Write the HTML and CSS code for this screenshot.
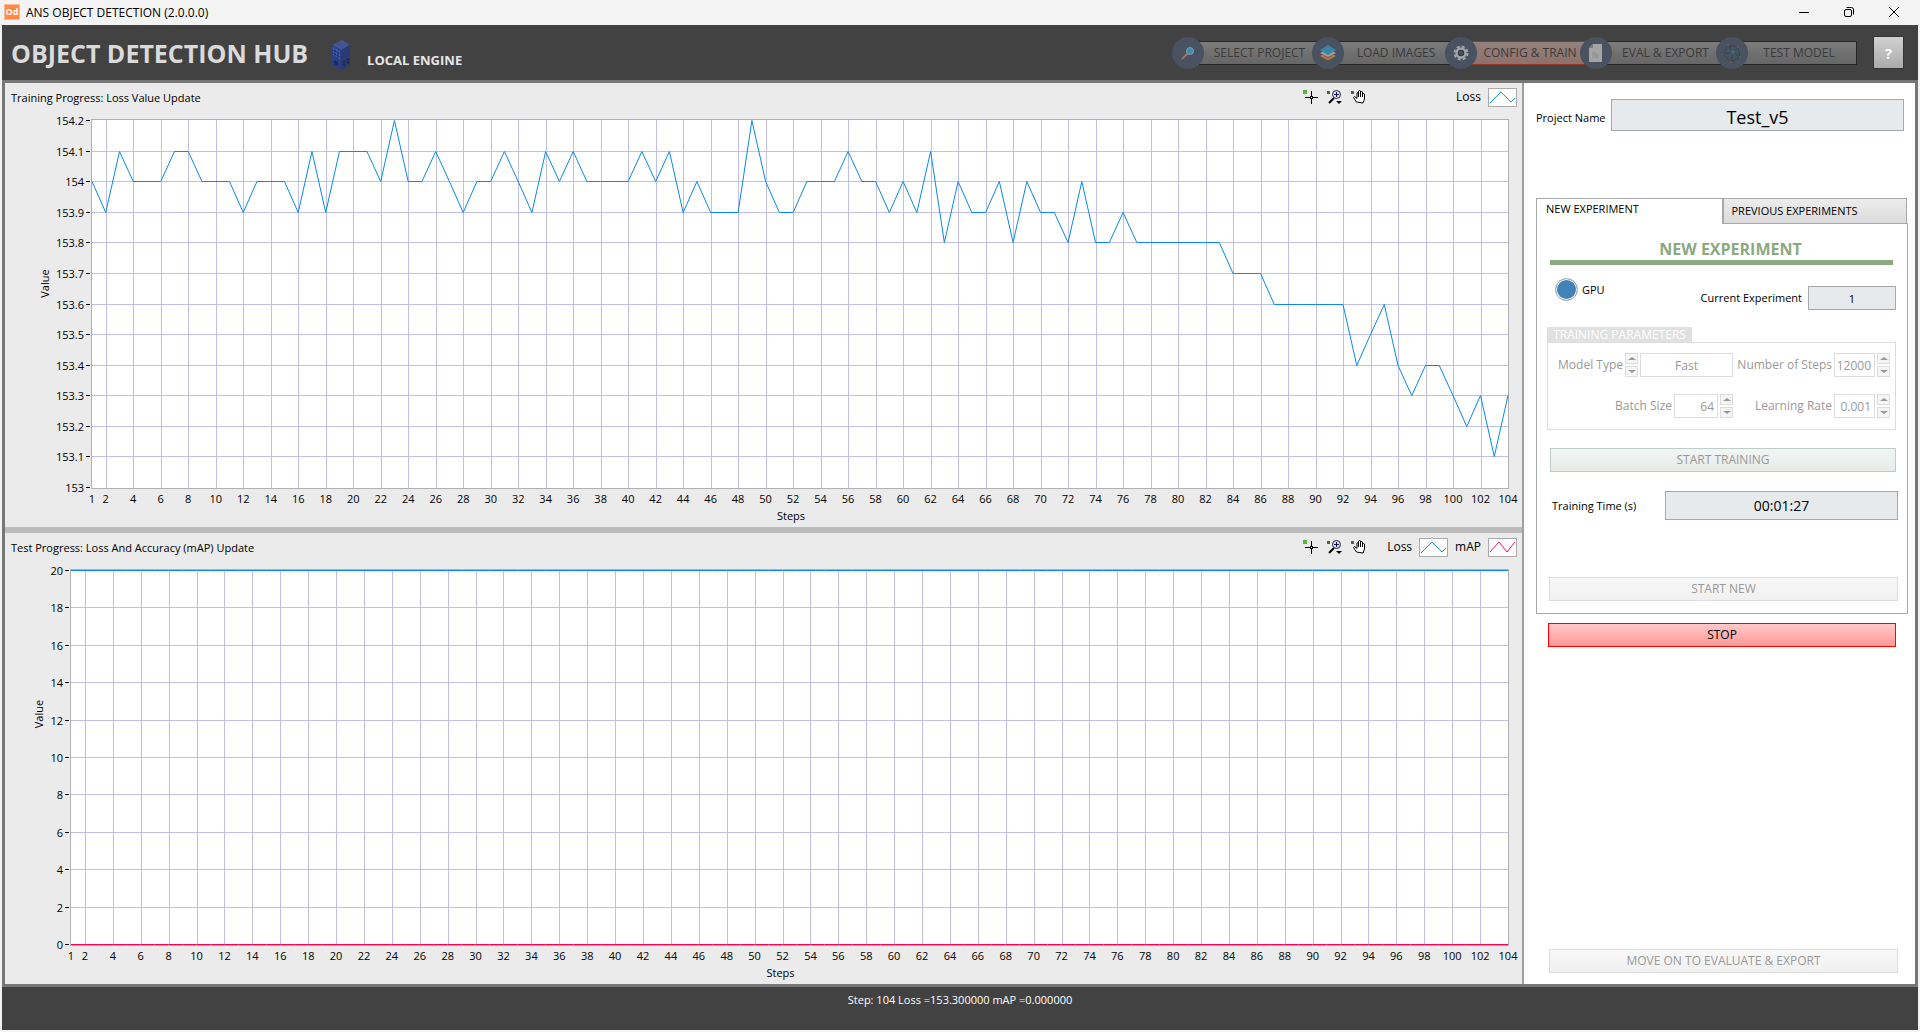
FILE: index.html
```html
<!DOCTYPE html>
<html lang="en">
<head>
    <meta charset="UTF-8">
    <meta name="viewport" content="width=device-width, initial-scale=1.0">
    <title>ANS OBJECT DETECTION</title>
    <link rel="stylesheet" href="styles.css">
</head>
<body>
    <div class="titlebar">
        <span class="app-icon">Od</span>
        <span class="app-name">ANS OBJECT DETECTION (2.0.0.0)</span>
        <div class="window-buttons">
            <button aria-label="Minimize"><svg width="12" height="12" viewBox="0 0 12 12"><path d="M1 6.5h10"/></svg></button>
            <button aria-label="Restore"><svg width="12" height="12" viewBox="0 0 12 12"><rect x="1.5" y="3.5" width="7" height="7" rx="1.5"/><path d="M3.5 1.5h5a2 2 0 0 1 2 2v5"/></svg></button>
            <button aria-label="Close"><svg width="12" height="12" viewBox="0 0 12 12"><path d="M1 1l10 10M11 1L1 11"/></svg></button>
        </div>
    </div>

    <div class="app">
        <header class="header">
            <h1>OBJECT DETECTION HUB</h1>
            <svg class="server-icon" width="20" height="32" viewBox="0 0 20 32">
                <path d="M1 6L11 1l8 5-9 5z" fill="#3f5596"/>
                <path d="M1 6l9 5v20l-9-5z" fill="#2a3f86"/>
                <path d="M10 11l9-5v20l-9 5z" fill="#2b3a70"/>
                <path d="M2 8l7 4v8l-7-4z" fill="#3f66b8"/>
                <path d="M2 11l7 4M2 14l7 4M4 9v8M7 11v8" stroke="#1f316e"/>
                <path d="M3 21l4 2v4l-4-2z" fill="#1b2858"/>
                <path d="M12 23l2-1M16 21l2-1M12 26l2-1M16 24l2-1" stroke="#1b2858" stroke-width="2"/>
            </svg>
            <span class="engine">LOCAL ENGINE</span>

            <nav class="steps">
                <button class="step">
                    <span class="step-icon"><svg width="16" height="16" viewBox="0 0 16 16"><path d="M2 14l6-6" stroke="#a9744a" stroke-width="2"/><circle cx="10" cy="6" r="3.5" fill="#3d8fb0" stroke="#8a98a8" stroke-width="1"/></svg></span>
                    <span class="step-label">SELECT PROJECT</span>
                </button>
                <button class="step">
                    <span class="step-icon"><svg width="18" height="18" viewBox="0 0 18 18"><path d="M1 12l8 4.500 8-4.500-3-1.500-5 3-5-3z" fill="#b07a3c"/><path d="M1 9l8 5 8-5-3-1.500-5 3-5-3z" fill="#a83a35"/><path d="M1 9l3-1.500 5 3 5-3L17 9l-8 4z" fill="#9aa3a8"/><path d="M1 6l8-5 8 5-8 5z" fill="#3787a8"/></svg></span>
                    <span class="step-label">LOAD IMAGES</span>
                </button>
                <button class="step active">
                    <span class="step-icon"><svg width="16" height="16" viewBox="0 0 16 16"><circle cx="8" cy="8" r="6.500" fill="none" stroke="#a2a4a6" stroke-width="2" stroke-dasharray="3 2.100"/><circle cx="8" cy="8" r="4.500" fill="#343c49" stroke="#a2a4a6" stroke-width="2.500"/><circle cx="8" cy="8" r="2" fill="#485261"/></svg></span>
                    <span class="step-label">CONFIG &amp; TRAIN</span>
                </button>
                <button class="step">
                    <span class="step-icon"><svg width="14" height="18" viewBox="0 0 14 18"><path d="M4 0h9v18H0V4z" fill="#a4a4a4"/><path d="M4 0v4H0z" fill="#777b80"/><path d="M3 8h4v2h3v4H3z" fill="#989898"/></svg></span>
                    <span class="step-label">EVAL &amp; EXPORT</span>
                </button>
                <button class="step">
                    <span class="step-icon"><svg width="20" height="20" viewBox="0 0 20 20"><path d="M6 2l10 2 2 10-9 5L1 11zM11 9L6 2M11 9l5-5M11 9l7 5M11 9l-2 10M11 9L1 11" fill="none" stroke="#39424f"/><circle cx="11" cy="9" r="2" fill="#35707f"/><circle cx="6" cy="2" r="1" fill="#92563b"/><circle cx="16" cy="4" r="1" fill="#92563b"/><circle cx="9" cy="19" r="1" fill="#92563b"/><circle cx="1" cy="11" r="1" fill="#39704e"/><circle cx="18" cy="14" r="1" fill="#39704e"/></svg></span>
                    <span class="step-label">TEST MODEL</span>
                </button>
            </nav>
            <button class="help">?</button>
        </header>

        <main class="workspace">
            <div class="charts">
                <section class="chart-panel training">
                    <div class="chart-header">
                        <h2>Training Progress: Loss Value Update</h2>
                        <div class="chart-tools"></div>
                        <div class="legend">
                            <span>Loss</span>
                            <svg class="swatch" width="27" height="17" viewBox="0 0 27 17"><path d="M1 14L12 3l10 10 4-4" stroke="#1a8fe8"/></svg>
                        </div>
                    </div>
                    <div class="chart" id="trainingChart"></div>
                </section>
                <section class="chart-panel testing">
                    <div class="chart-header">
                        <h2>Test Progress: Loss And Accuracy (mAP) Update</h2>
                        <div class="chart-tools"></div>
                        <div class="legend">
                            <span>Loss</span>
                            <svg class="swatch" width="27" height="17" viewBox="0 0 27 17"><path d="M1 14L12 3l10 10 4-4" stroke="#1a8fe8"/></svg>
                            <span>mAP</span>
                            <svg class="swatch" width="27" height="17" viewBox="0 0 27 17"><path d="M1 13L10 3l8 10 8-10" stroke="#f5145f"/></svg>
                        </div>
                    </div>
                    <div class="chart" id="testChart"></div>
                </section>
            </div>

            <aside class="sidebar">
                <div class="project">
                    <label for="projectName">Project Name</label>
                    <input type="text" id="projectName" class="field" value="Test_v5" readonly>
                </div>

                <div class="tabs">
                    <button class="tab selected">NEW EXPERIMENT</button>
                    <button class="tab">PREVIOUS EXPERIMENTS</button>
                </div>
                <div class="tab-page">
                    <h3>NEW EXPERIMENT</h3>
                    <div class="device-row">
                        <div class="gpu"><span class="led"></span>GPU</div>
                        <div class="current">
                            <label for="currentExperiment">Current Experiment</label>
                            <input type="text" id="currentExperiment" class="field" value="1" readonly>
                        </div>
                    </div>

                    <fieldset class="params" disabled>
                        <legend>TRAINING PARAMETERS</legend>
                        <div class="param-grid">
                            <div class="param">
                                <label for="modelType">Model Type</label>
                                <span class="spinner"><button aria-label="Previous model"></button><button class="down" aria-label="Next model"></button></span>
                                <input type="text" id="modelType" class="model" value="Fast">
                            </div>
                            <div class="param">
                                <label for="numSteps">Number of Steps</label>
                                <input type="text" id="numSteps" value="12000">
                                <span class="spinner"><button aria-label="More steps"></button><button class="down" aria-label="Fewer steps"></button></span>
                            </div>
                            <div class="param">
                                <label for="batchSize">Batch Size</label>
                                <input type="text" id="batchSize" value="64">
                                <span class="spinner"><button aria-label="Larger batch"></button><button class="down" aria-label="Smaller batch"></button></span>
                            </div>
                            <div class="param">
                                <label for="learningRate">Learning Rate</label>
                                <input type="text" id="learningRate" value="0.001">
                                <span class="spinner"><button aria-label="Higher rate"></button><button class="down" aria-label="Lower rate"></button></span>
                            </div>
                        </div>
                    </fieldset>

                    <button class="action start-training" disabled>START TRAINING</button>

                    <div class="time-row">
                        <label for="trainingTime">Training Time (s)</label>
                        <input type="text" id="trainingTime" class="field" value="00:01:27" readonly>
                    </div>

                    <button class="action" disabled>START NEW</button>
                </div>

                <button class="action stop">STOP</button>
                <button class="action move-on" disabled>MOVE ON TO EVALUATE &amp; EXPORT</button>
            </aside>
        </main>

        <footer class="status">Step: 104 Loss =153.300000 mAP =0.000000</footer>
    </div>

    <script src="charts.js"></script>
</body>
</html>
```
FILE: styles.css
```css
* {
    box-sizing: border-box;
}

body {
    margin: 0;
    height: 100vh;
    display: flex;
    flex-direction: column;
    background-color: #F3F3F3;
    font-family: 'Segoe UI', 'Open Sans', 'Noto Sans', sans-serif;
    font-size: 11px;
    line-height: 16px;
    color: #000;
}

button,
input {
    font: inherit;
    color: inherit;
    margin: 0;
    padding: 0;
    border-radius: 0;
    min-width: 0;
}

h1, h2, h3 {
    margin: 0;
}

/* window title bar */
.titlebar {
    height: 25px;
    flex: none;
    display: flex;
    align-items: center;
    padding: 0 20px 2px 4px;
}

.app-icon {
    width: 16px;
    height: 16px;
    border: 1px solid #FFB98C;
    background-color: #FF8A45;
    color: white;
    font-size: 9px;
    font-weight: 700;
    line-height: 14px;
    text-align: center;
    margin-right: 6px;
}

.app-name {
    padding-top: 2px;
    font-size: 12px;
}

.window-buttons {
    margin-left: auto;
    display: flex;
    gap: 33px;
}

.window-buttons button {
    width: 12px;
    height: 12px;
    border: none;
    background: none;
}

.window-buttons svg {
    display: block;
    fill: none;
    stroke: #000;
}

/* application frame */
.app {
    flex: 1;
    min-height: 0;
    display: flex;
    flex-direction: column;
    margin: 0 2px 2px;
    background-color: #424242;
}

.header {
    height: 55px;
    flex: none;
    display: flex;
    align-items: center;
    padding: 0 14px 0 9px;
}

.header h1 {
    font-size: 25px;
    line-height: 32px;
    padding-top: 1px;
    font-weight: 700;
    color: #DADADA;
}

.server-icon {
    margin: 4px 16px 0 23px;
}

.engine {
    font-size: 13px;
    font-weight: 700;
    color: #E6E6E6;
    margin-top: 15px;
}

.steps {
    margin-left: auto;
    display: grid;
    grid-template-columns: 140px 133px 135px 136px 141px;
}

.step {
    display: flex;
    align-items: center;
    border: none;
    background: none;
    color: #3A3A3A;
    font-size: 12px;
}

.step-icon {
    position: relative;
    z-index: 1;
    flex: none;
    width: 32px;
    height: 32px;
    border-radius: 50%;
    background-color: #485261;
    display: flex;
    align-items: center;
    justify-content: center;
}

.step-label {
    flex: 1;
    height: 24px;
    line-height: 22px;
    margin: 0 -10px;
    padding-left: 3px;
    border: 1px solid #262626;
    background: linear-gradient(#7B7B7B, #666);
    text-align: center;
    white-space: nowrap;
}

.step:last-child .step-label {
    margin-right: 0;
}

.step.active .step-label {
    border-color: #8E3A27;
    background: linear-gradient(#93817C, #90706A);
}

.help {
    width: 31px;
    height: 33px;
    margin-left: 16px;
    border: 1px solid #333;
    background: linear-gradient(#D0D0D0, #ABABAB);
    color: white;
    font-size: 15px;
    font-weight: 700;
}

.workspace {
    flex: 1;
    min-height: 0;
    display: flex;
    border: 3px solid #777;
    background-color: white;
}

.status {
    height: 43px;
    flex: none;
    padding-top: 5px;
    color: white;
    text-align: center;
}

/* charts */
.charts {
    flex: 1;
    min-width: 0;
    display: flex;
    flex-direction: column;
    gap: 6px;
    background-color: #BBB;
    border-right: 2px solid #A0A0A0;
}

.chart-panel {
    min-height: 0;
    display: flex;
    flex-direction: column;
    background-color: #EBEBEB;
}

.training {
    flex: 444 0 0;
}

.testing {
    flex: 451 0 0;
}

.chart-header {
    height: 28px;
    flex: none;
    display: flex;
    align-items: center;
    padding: 0 5px 0 6px;
}

.chart-header h2 {
    font-size: 11px;
    font-weight: 400;
    padding-top: 2px;
    margin-right: auto;
}

.chart-tools {
    display: flex;
    gap: 8px;
}

.chart-tools button {
    width: 16px;
    height: 16px;
    border: none;
    background: none;
}

.chart-tools svg {
    display: block;
}

.legend {
    width: 150px;
    display: flex;
    align-items: center;
    justify-content: flex-end;
    gap: 7px;
    font-size: 12px;
}

.legend span {
    padding-bottom: 1px;
}

.swatch {
    width: 29px;
    height: 19px;
    border: 1px solid #AAA;
    background-color: white;
    fill: none;
}

.chart {
    flex: 1;
    min-height: 0;
}

.chart svg {
    display: block;
}

.chart text {
    font-size: 11px;
    fill: #000;
}

.plot {
    fill: white;
    stroke: #B0B0B0;
}

.grid {
    fill: none;
    stroke: #BFBFEA;
}

.tick {
    stroke: #000;
}

.series {
    fill: none;
    stroke-width: 1;
}

/* sidebar */
.sidebar {
    width: 391px;
    flex: none;
    display: flex;
    flex-direction: column;
    padding: 16px 7px 11px 12px;
}

.field {
    border: 1px solid #A5A9AC;
    background-color: #E6EAED;
    text-align: center;
}

.project {
    display: flex;
    align-items: center;
    gap: 2px;
    margin: 0 4px 67px 0;
}

.project label {
    width: 73px;
    padding-top: 6px;
    white-space: nowrap;
}

.project .field {
    flex: 1;
    height: 32px;
    padding-top: 4px;
    font-size: 18px;
}

.tabs {
    height: 25px;
    display: grid;
    grid-template-columns: 1fr 1fr;
    padding-right: 1px;
}

.tab {
    border: 1px solid #A5A9AC;
    border-left-width: 2px;
    background: linear-gradient(#ECECEC, #DCDCDE);
    padding-left: 8px;
    text-align: left;
}

.tab.selected {
    position: relative;
    z-index: 1;
    height: 26px;
    border-width: 1px 0 0 1px;
    background: white;
    padding: 0 0 6px 9px;
}

.tab-page {
    height: 391px;
    border: 1px solid #A5A9AC;
    padding: 16px 9px 0 12px;
}

.tab-page h3 {
    margin: 0 5px 0 1px;
    padding: 0 0 2px 18px;
    border-bottom: 5px solid #8CAA80;
    color: #8CAA80;
    font-size: 16px;
    line-height: 18px;
    text-align: center;
}

.device-row {
    display: flex;
    justify-content: space-between;
    margin: 13px 2px 0 6px;
}

.gpu {
    display: flex;
    align-items: center;
    gap: 4px;
    height: 23px;
}

.led {
    width: 23px;
    height: 23px;
    border: 1px solid #B5B5B5;
    border-radius: 50%;
    background: #4183B7;
    box-shadow: inset 0 0 0 1px white;
}

.current {
    display: flex;
    align-items: center;
    gap: 6px;
    margin-top: 8px;
}

.current .field {
    width: 88px;
    height: 24px;
}

.params {
    margin: 17px 2px 18px -2px;
    padding: 0;
    border: none;
    min-width: 0;
    color: #999;
}

.params legend {
    width: 145px;
    height: 15px;
    margin: 0 auto 0 0;
    padding: 0;
    background-color: #E0E0E0;
    color: white;
    font-size: 12px;
    line-height: 15px;
    text-align: center;
}

.param-grid {
    height: 88px;
    border: 1px solid #DDD;
    padding: 10px 5px 0 0;
    display: grid;
    grid-template-columns: 185px 1fr;
    grid-auto-rows: 24px;
    row-gap: 17px;
}

.param {
    display: flex;
    align-items: center;
    justify-content: flex-end;
    gap: 2px;
    font-size: 12px;
    white-space: nowrap;
}

.param input {
    width: 41px;
    height: 24px;
    border: 1px solid #DDD;
    background: white;
    text-align: right;
    padding-right: 3px;
}

#batchSize {
    width: 44px;
}

.param .model {
    width: 93px;
    text-align: center;
    padding: 0;
}

.spinner {
    display: flex;
    flex-direction: column;
    justify-content: space-between;
    width: 13px;
    height: 24px;
}

.spinner button {
    height: 11px;
    border: 1px solid #DDD;
    background: #F5F5F5;
    display: flex;
    align-items: center;
    justify-content: center;
}

.spinner button::after {
    content: "";
    border: 4px solid transparent;
    border-top: none;
    border-bottom: 3px solid #999;
}

.spinner .down::after {
    border-top: 3px solid #999;
    border-bottom: none;
}

.action {
    display: block;
    width: 100%;
    height: 24px;
    border: 1px solid #DDD;
    background: linear-gradient(#F8F8F8, #F0F0F0);
    color: #999;
    font-size: 12px;
    flex: none;
}

.tab-page .start-training {
    width: calc(100% - 3px);
    margin-left: 1px;
    border-color: #BFCDC8;
    background: linear-gradient(#F1F5F3, #E6EBE8);
}

.time-row {
    display: flex;
    align-items: center;
    justify-content: space-between;
    margin: 19px 0 57px 3px;
}

.time-row .field {
    width: 233px;
    height: 29px;
    font-size: 14px;
}

.stop {
    width: auto;
    margin: 9px 12px 0;
    border-color: #F00;
    background: linear-gradient(#FFC8C8, #FF9999);
    color: #000;
}

.move-on {
    width: auto;
    margin: auto 10px 0 13px;
}
```
FILE: charts.js
```js
const lossValues = [
    154, 153.9, 154.1, 154, 154, 154, 154.1, 154.1, 154, 154, 154, 153.9, 154,
    154, 154, 153.9, 154.1, 153.9, 154.1, 154.1, 154.1, 154, 154.2, 154, 154, 154.1,
    154, 153.9, 154, 154, 154.1, 154, 153.9, 154.1, 154, 154.1, 154, 154, 154,
    154, 154.1, 154, 154.1, 153.9, 154, 153.9, 153.9, 153.9, 154.2, 154, 153.9, 153.9,
    154, 154, 154, 154.1, 154, 154, 153.9, 154, 153.9, 154.1, 153.8, 154, 153.9,
    153.9, 154, 153.8, 154, 153.9, 153.9, 153.8, 154, 153.8, 153.8, 153.9, 153.8, 153.8,
    153.8, 153.8, 153.8, 153.8, 153.8, 153.7, 153.7, 153.7, 153.6, 153.6, 153.6, 153.6, 153.6,
    153.6, 153.4, 153.5, 153.6, 153.4, 153.3, 153.4, 153.4, 153.3, 153.2, 153.3, 153.1, 153.3
];
const lastStep = lossValues.length;

const toolButtons = `
    <button aria-label="Cursor"><svg width="16" height="16" viewBox="0 0 16 16"><rect x="0" y="1" width="4" height="4" fill="#55b83c"/><path d="M8.500 2v5m0 3v5M2 8.500h5m3 0h5" stroke="#000"/><rect x="7.500" y="7.500" width="2" height="2" fill="none" stroke="#000"/></svg></button>
    <button aria-label="Zoom"><svg width="16" height="16" viewBox="0 0 16 16"><rect x="0" y="2" width="3" height="3" fill="#4a6440"/><path d="M7 9l-5 5" stroke="#000" stroke-width="2"/><circle cx="9.500" cy="5.500" r="4" fill="#dcdcff" stroke="#223"/><path d="M7 5.500h5M9.500 3v5" stroke="#114"/><path d="M9 12h6l-3 3z"/></svg></button>
    <button aria-label="Pan"><svg width="16" height="16" viewBox="0 0 16 16"><rect x="0" y="2" width="3" height="3" fill="#4a6440"/><path d="M5.500 13L2.500 8.500l1-1 2.500 2V4q1-1 1.500 0v4-6q1-1 2 0v6-5q1-1 2 0v5-3q1-1 2 0v5l-1.500 4z" fill="#fff" stroke="#000"/></svg></button>`;

document.querySelectorAll('.chart-tools').forEach(tools => {
    tools.innerHTML = toolButtons;
});

function drawChart(id, opts) {
    const box = document.getElementById(id);
    const width = box.clientWidth;
    const height = box.clientHeight;
    const left = opts.left;
    const right = width - 14;
    const top = 9;
    const bottom = height - 40;
    const x = step => left + (step - 1) * (right - left) / (lastStep - 1);
    const y = value => bottom - (value - opts.min) * (bottom - top) / (opts.max - opts.min);
    const crisp = n => Math.round(n) + 0.5;

    let grid = '';
    let labels = `<text x="${left}" y="${bottom + 16}" text-anchor="middle">1</text>`;
    for (let step = 2; step <= lastStep; step += 2) {
        if (step < lastStep) {
            grid += `M${crisp(x(step))} ${top}V${bottom + 1}`;
        }
        labels += `<text x="${x(step)}" y="${bottom + 16}" text-anchor="middle">${step}</text>`;
    }

    let ticks = '';
    const count = Math.round((opts.max - opts.min) / opts.interval);
    for (let i = 0; i <= count; i++) {
        const value = Number((opts.min + i * opts.interval).toFixed(1));
        const py = crisp(y(value));
        if (i > 0 && i < count) {
            grid += `M${left} ${py}H${right}`;
        }
        ticks += `M${left - 6} ${py}h4`;
        labels += `<text x="${left - 8}" y="${py + 4}" text-anchor="end">${value}</text>`;
    }

    const lines = opts.series.map(s => {
        const points = s.values.map((v, i) => `${x(i + 1)},${crisp(y(v))}`).join(' ');
        return `<polyline class="series" stroke="${s.color}" points="${points}"/>`;
    }).join('');

    const titleY = (top + bottom) / 2 - opts.titleShift;
    box.innerHTML = `
        <svg width="${width}" height="${height}">
            <rect class="plot" x="${left - 0.5}" y="${top - 0.5}" width="${right - left + 1}" height="${bottom - top + 2}"/>
            <path class="grid" d="${grid}"/>
            <path class="tick" d="${ticks}"/>
            ${lines}
            ${labels}
            <text x="${(left + right) / 2 - 9}" y="${bottom + 33}" text-anchor="middle">Steps</text>
            <text transform="translate(${left - 43 + opts.titleInset} ${titleY}) rotate(-90)" text-anchor="middle">Value</text>
        </svg>`;
}

function drawCharts() {
    drawChart('trainingChart', {
        left: 87, min: 153, max: 154.2, interval: 0.1, titleShift: 20, titleInset: 0,
        series: [{ color: '#0a87f0', values: lossValues }]
    });
    drawChart('testChart', {
        left: 66, min: 0, max: 20, interval: 2, titleShift: 43, titleInset: 15,
        series: [
            { color: '#0a87f0', values: lossValues.map(() => 20) },
            { color: '#ff0050', values: lossValues.map(() => 0) }
        ]
    });
}

window.addEventListener('resize', drawCharts);
drawCharts();
```
